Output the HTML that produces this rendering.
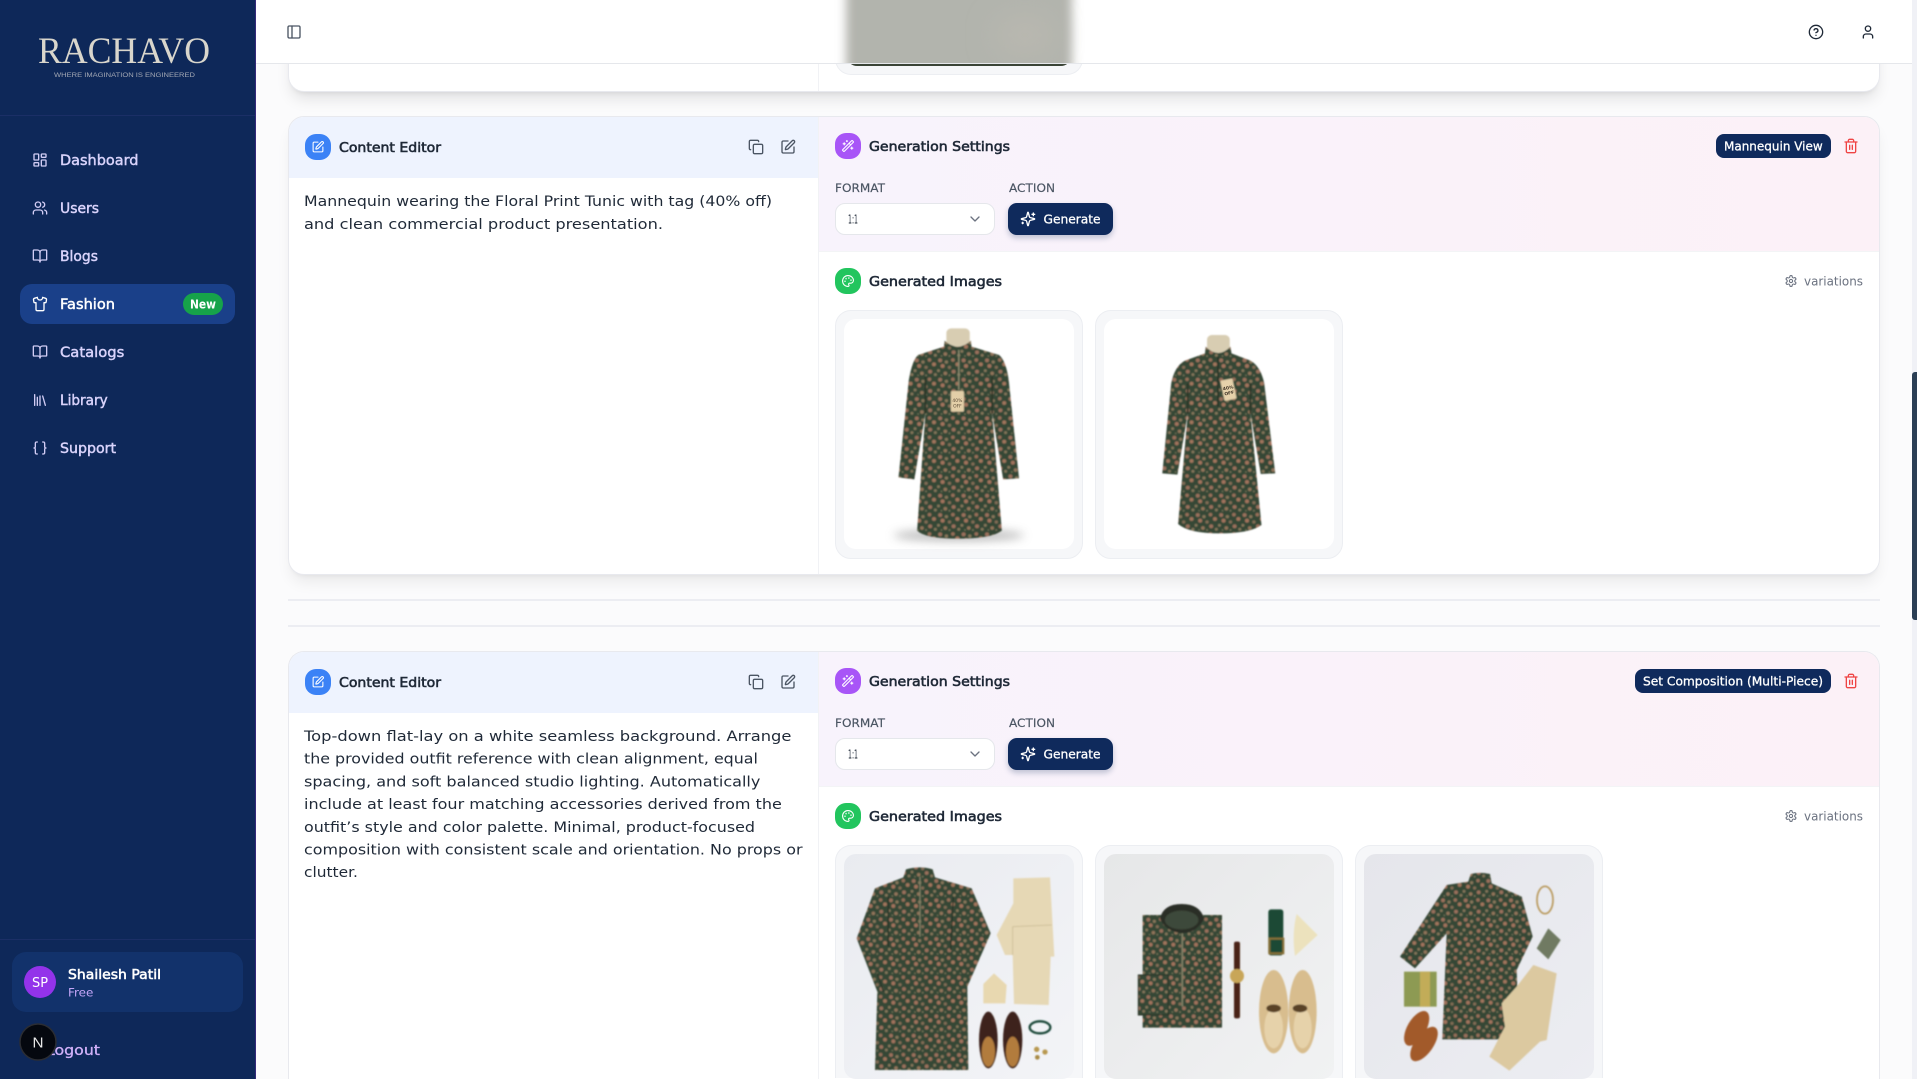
<!DOCTYPE html>
<html lang="en"><head><meta charset="utf-8"><title>Rachavo Fashion</title>
<style>
html,body{margin:0;padding:0;width:1917px;height:1079px;overflow:hidden;background:#fbfbfc;font-family:"DejaVu Sans","Liberation Sans",sans-serif}
#root{position:absolute;left:0;top:0;width:1917px;height:1079px;overflow:hidden;background:#fbfbfc}
.a{position:absolute;box-sizing:border-box}
.card{left:288px;width:1592px;background:#fff;border:1px solid #e8e9ee;border-radius:16px;overflow:hidden;box-shadow:0 10px 15px -3px rgba(0,0,0,.07),0 4px 6px -4px rgba(0,0,0,.07)}
.lh{left:0;top:0;width:529px;height:61px;background:#eef3fe}
.rh{left:530px;top:0;width:1060px;height:135px;background:linear-gradient(90deg,#f8f3fc,#fcf1f7);border-bottom:1px solid #f3f4f6}
.dv{left:529px;top:0;width:1px;height:100%;background:#f1f2f5}
.sel{left:546px;top:86px;width:160px;height:32px;background:#fff;border:1px solid #e5e7eb;border-radius:10px}
.btn{left:719px;top:86px;width:105px;height:32px;background:#0f2a5c;border-radius:9px;box-shadow:0 3px 6px rgba(15,42,92,.25)}
.ic{width:248px;height:249px;background:#f6f7f9;border:1px solid #eceef2;border-radius:16px}
.ic3{height:233px;border-bottom:0;border-radius:16px 16px 0 0}
svg{position:absolute;left:0;top:0}
text{font-family:"DejaVu Sans","Liberation Sans",sans-serif}
.ico{fill:none;stroke-linecap:round;stroke-linejoin:round;stroke-width:2}
.h{font-size:13.5px;fill:#1f2937;stroke:#1f2937;stroke-width:.6}
.n{font-size:14px;fill:#d9d3fb;stroke:#d9d3fb;stroke-width:.45}
.b{font-size:14.2px;fill:#1f2937}
.l{font-size:11.5px;fill:#4b5563;stroke:#4b5563;stroke-width:.15}
.w{font-size:12.5px;fill:#fff;stroke:#fff;stroke-width:.3}
</style></head><body>
<div id="root">

<!-- top card -->
<div class="a" style="left:288px;top:0;width:1592px;height:92px;background:#fff;border:1px solid #e8e9ee;border-top:0;border-radius:0 0 16px 16px;box-shadow:0 10px 15px -3px rgba(0,0,0,.1),0 4px 6px -4px rgba(0,0,0,.1);overflow:hidden">
  <div class="a dv"></div>
  <div class="a" style="left:546px;top:0;width:248px;height:75px;background:#f6f7f9;border:1px solid #eceef2;border-top:0;border-radius:0 0 16px 16px"></div>
  <div class="a" style="left:558px;top:0;width:224px;height:65.7px;background:#3a4436;border-radius:0 0 10px 10px"></div>
</div>

<!-- card 2 -->
<div class="a card" style="top:116px;height:459px">
  <div class="a lh"></div><div class="a rh"></div><div class="a dv"></div>
  <div class="a sel"></div><div class="a btn"></div>
  <div class="a ic" style="left:546px;top:193px"></div>
  <div class="a ic" style="left:806px;top:193px"></div>
</div>
<div class="a" style="left:288px;top:599px;width:1592px;height:2px;background:#ecedf2"></div>
<div class="a" style="left:288px;top:625px;width:1592px;height:2px;background:#ecedf2"></div>

<!-- card 3 -->
<div class="a card" style="top:651px;height:428px;border-bottom:0;border-radius:16px 16px 0 0;box-shadow:none">
  <div class="a lh"></div><div class="a rh"></div><div class="a dv"></div>
  <div class="a sel"></div><div class="a btn"></div>
  <div class="a ic ic3" style="left:546px;top:193px"></div>
  <div class="a ic ic3" style="left:806px;top:193px"></div>
  <div class="a ic ic3" style="left:1066px;top:193px"></div>
</div>

<!-- header -->
<div class="a" style="left:256px;top:0;width:1656px;height:64px;background:#fff;border-bottom:1px solid #e5e7eb"></div>

<!-- scrollbar -->
<div class="a" style="left:1912px;top:0;width:5px;height:1079px;background:#f0f1f6"></div>
<div class="a" style="left:1912px;top:372px;width:5px;height:248px;background:#2b3f55;border-radius:3px 0 0 3px"></div>

<!-- sidebar -->
<div class="a" style="left:0;top:0;width:256px;height:1079px;background:#0e2859;border-right:1px solid #35297a"></div>
<div class="a" style="left:0;top:115px;width:255px;height:1px;background:#1b2f66"></div>
<div class="a" style="left:0;top:939px;width:255px;height:1px;background:#1b2f66"></div>
<div class="a" style="left:20px;top:284px;width:215px;height:40px;background:#1a4089;border-radius:12px"></div>
<div class="a" style="left:183px;top:293px;width:40px;height:22px;background:#16a34a;border-radius:11px"></div>
<div class="a" style="left:12px;top:952px;width:231px;height:60px;background:#12326b;border-radius:14px"></div>
<div class="a" style="left:24px;top:966px;width:32px;height:32px;background:#9333ea;border-radius:50%"></div>

<svg width="1917" height="1079" viewBox="0 0 1917 1079" xmlns="http://www.w3.org/2000/svg">
<defs>
<symbol id="i-dash" viewBox="0 0 24 24"><rect width="7" height="9" x="3" y="3" rx="1"/><rect width="7" height="5" x="14" y="3" rx="1"/><rect width="7" height="9" x="14" y="12" rx="1"/><rect width="7" height="5" x="3" y="16" rx="1"/></symbol>
<symbol id="i-users" viewBox="0 0 24 24"><path d="M16 21v-2a4 4 0 0 0-4-4H6a4 4 0 0 0-4 4v2"/><circle cx="9" cy="7" r="4"/><path d="M22 21v-2a4 4 0 0 0-3-3.87"/><path d="M16 3.13a4 4 0 0 1 0 7.75"/></symbol>
<symbol id="i-book" viewBox="0 0 24 24"><path d="M12 7v14"/><path d="M3 18a1 1 0 0 1-1-1V4a1 1 0 0 1 1-1h5a4 4 0 0 1 4 4 4 4 0 0 1 4-4h5a1 1 0 0 1 1 1v13a1 1 0 0 1-1 1h-6a3 3 0 0 0-3 3 3 3 0 0 0-3-3z"/></symbol>
<symbol id="i-shirt" viewBox="0 0 24 24"><path d="M20.38 3.46 16 2a4 4 0 0 1-8 0L3.62 3.46a2 2 0 0 0-1.34 2.23l.58 3.47a1 1 0 0 0 .99.84H6v10c0 1.1.9 2 2 2h8a2 2 0 0 0 2-2V10h2.15a1 1 0 0 0 .99-.84l.58-3.47a2 2 0 0 0-1.34-2.23z"/></symbol>
<symbol id="i-lib" viewBox="0 0 24 24"><path d="m16 6 4 14"/><path d="M12 6v14"/><path d="M8 8v12"/><path d="M4 4v16"/></symbol>
<symbol id="i-brace" viewBox="0 0 24 24"><path d="M8 3H7a2 2 0 0 0-2 2v5a2 2 0 0 1-2 2 2 2 0 0 1 2 2v5c0 1.1.9 2 2 2h1"/><path d="M16 21h1a2 2 0 0 0 2-2v-5c0-1.1.9-2 2-2a2 2 0 0 1-2-2V5a2 2 0 0 0-2-2h-1"/></symbol>
<symbol id="i-panel" viewBox="0 0 24 24"><rect width="18" height="18" x="3" y="3" rx="2"/><path d="M9 3v18"/></symbol>
<symbol id="i-help" viewBox="0 0 24 24"><circle cx="12" cy="12" r="10"/><path d="M9.09 9a3 3 0 0 1 5.83 1c0 2-3 3-3 3"/><path d="M12 17h.01"/></symbol>
<symbol id="i-user" viewBox="0 0 24 24"><path d="M19 21v-2a4 4 0 0 0-4-4H9a4 4 0 0 0-4 4v2"/><circle cx="12" cy="7" r="4"/></symbol>
<symbol id="i-copy" viewBox="0 0 24 24"><rect width="14" height="14" x="8" y="8" rx="2"/><path d="M4 16c-1.1 0-2-.9-2-2V4c0-1.1.9-2 2-2h10c1.1 0 2 .9 2 2"/></symbol>
<symbol id="i-pen" viewBox="0 0 24 24"><path d="M12 3H5a2 2 0 0 0-2 2v14a2 2 0 0 0 2 2h14a2 2 0 0 0 2-2v-7"/><path d="M18.375 2.625a1 1 0 0 1 3 3l-9.013 9.014a2 2 0 0 1-.853.505l-2.873.84a.5.5 0 0 1-.62-.62l.84-2.873a2 2 0 0 1 .506-.852z"/></symbol>
<symbol id="i-wand" viewBox="0 0 24 24"><path d="m21.64 3.64-1.28-1.28a1.21 1.21 0 0 0-1.72 0L2.36 18.64a1.21 1.21 0 0 0 0 1.72l1.28 1.28a1.2 1.2 0 0 0 1.72 0L21.64 5.36a1.2 1.2 0 0 0 0-1.72"/><path d="m14 7 3 3"/><path d="M5 6v4"/><path d="M19 14v4"/><path d="M10 2v2"/><path d="M7 8H3"/><path d="M21 16h-4"/><path d="M11 3H9"/></symbol>
<symbol id="i-pal" viewBox="0 0 24 24"><path d="M12 22a1 1 0 0 1 0-20 10 9 0 0 1 10 9 5 5 0 0 1-5 5h-2.25a1.75 1.75 0 0 0-1.4 2.8l.3.4a1.75 1.75 0 0 1-1.4 2.8z"/><circle cx="13.5" cy="6.5" r=".5"/><circle cx="17.5" cy="10.5" r=".5"/><circle cx="6.5" cy="12.5" r=".5"/><circle cx="8.5" cy="7.5" r=".5"/></symbol>
<symbol id="i-spark" viewBox="0 0 24 24"><path d="M9.937 15.5A2 2 0 0 0 8.5 14.063l-6.135-1.582a.5.5 0 0 1 0-.962L8.5 9.936A2 2 0 0 0 9.937 8.5l1.582-6.135a.5.5 0 0 1 .963 0L14.063 8.5A2 2 0 0 0 15.5 9.937l6.135 1.581a.5.5 0 0 1 0 .964L15.5 14.063a2 2 0 0 0-1.437 1.437l-1.582 6.135a.5.5 0 0 1-.963 0z"/><path d="M20 3v4"/><path d="M22 5h-4"/><path d="M4 17v2"/><path d="M5 18H3"/></symbol>
<symbol id="i-trash" viewBox="0 0 24 24"><path d="M3 6h18"/><path d="M19 6v14c0 1-1 2-2 2H7c-1 0-2-1-2-2V6"/><path d="M8 6V4c0-1 1-2 2-2h4c1 0 2 1 2 2v2"/><path d="M10 11v6"/><path d="M14 11v6"/></symbol>
<symbol id="i-gear" viewBox="0 0 24 24"><path d="M12.22 2h-.44a2 2 0 0 0-2 2v.18a2 2 0 0 1-1 1.73l-.43.25a2 2 0 0 1-2 0l-.15-.08a2 2 0 0 0-2.73.73l-.22.38a2 2 0 0 0 .73 2.73l.15.1a2 2 0 0 1 1 1.72v.51a2 2 0 0 1-1 1.74l-.15.09a2 2 0 0 0-.73 2.73l.22.38a2 2 0 0 0 2.73.73l.15-.08a2 2 0 0 1 2 0l.43.25a2 2 0 0 1 1 1.73V20a2 2 0 0 0 2 2h.44a2 2 0 0 0 2-2v-.18a2 2 0 0 1 1-1.73l.43-.25a2 2 0 0 1 2 0l.15.08a2 2 0 0 0 2.73-.73l.22-.39a2 2 0 0 0-.73-2.73l-.15-.08a2 2 0 0 1-1-1.74v-.5a2 2 0 0 1 1-1.74l.15-.09a2 2 0 0 0 .73-2.73l-.22-.38a2 2 0 0 0-2.73-.73l-.15.08a2 2 0 0 1-2 0l-.43-.25a2 2 0 0 1-1-1.73V4a2 2 0 0 0-2-2z"/><circle cx="12" cy="12" r="3"/></symbol>
<symbol id="i-chev" viewBox="0 0 24 24"><path d="m6 9 6 6 6-6"/></symbol>

<pattern id="fl" patternUnits="userSpaceOnUse" width="68" height="58">
<rect width="68" height="58" fill="#354636"/>
<circle cx="9" cy="7" r="6" fill="#9a705c"/><circle cx="27" cy="12" r="5" fill="#87765a"/>
<circle cx="16" cy="24" r="6" fill="#a0725c"/><circle cx="36" cy="28" r="5" fill="#826c54"/>
<circle cx="4" cy="38" r="4.500" fill="#85765a"/><circle cx="46" cy="6" r="5.500" fill="#966e58"/>
<circle cx="59" cy="19" r="6" fill="#a0745c"/><circle cx="48" cy="41" r="6" fill="#9a705c"/>
<circle cx="24" cy="46" r="5.500" fill="#92745a"/><circle cx="63" cy="50" r="4.500" fill="#85765a"/>
<circle cx="36" cy="52" r="3" fill="#757055"/><circle cx="13" cy="52" r="2.500" fill="#747355"/>
</pattern>
<filter id="sf" x="-5%" y="-5%" width="110%" height="110%"><feGaussianBlur stdDeviation="2.200"/></filter>
<filter id="sh" x="-30%" y="-200%" width="160%" height="500%"><feGaussianBlur stdDeviation="14"/></filter>
<filter id="bl" x="-10%" y="-50%" width="120%" height="200%"><feGaussianBlur stdDeviation="5"/></filter>
<filter id="bl2" x="-50%" y="-50%" width="200%" height="200%"><feGaussianBlur stdDeviation="14"/></filter>
<clipPath id="hc"><rect x="800" y="0" width="320" height="63"/></clipPath>
<clipPath id="c1"><rect x="844" y="854" width="230" height="225" rx="12"/></clipPath>
<clipPath id="c2"><rect x="1104" y="854" width="230" height="225" rx="12"/></clipPath>
<clipPath id="c3"><rect x="1364" y="854" width="230" height="225" rx="12"/></clipPath>
<linearGradient id="g1" x1="0" y1="0" x2="1" y2="1"><stop offset="0" stop-color="#e9ebf0"/><stop offset="1" stop-color="#f3f4f7"/></linearGradient>
<linearGradient id="g2" x1="0" y1="0" x2="1" y2="1"><stop offset="0" stop-color="#e6e7e8"/><stop offset="1" stop-color="#f1f2f3"/></linearGradient>
<linearGradient id="g3" x1="0" y1="0" x2="1" y2="1"><stop offset="0" stop-color="#e5e6eb"/><stop offset="1" stop-color="#ecedf2"/></linearGradient>
</defs>

<!-- header blur -->
<g clip-path="url(#hc)"><rect x="846" y="-30" width="226" height="110" fill="#b2b4ad" filter="url(#bl)"/>
<ellipse cx="1025" cy="35" rx="30" ry="20" fill="#b9b8b0" filter="url(#bl2)"/></g>

<!-- logo -->
<text x="38" y="63" font-size="37.500" textLength="172" lengthAdjust="spacingAndGlyphs" style="font-family:'Liberation Serif',serif" fill="#d9d6cc">RACHAVO</text>
<text x="54" y="77" font-size="6.800" textLength="141" lengthAdjust="spacingAndGlyphs" style="font-family:'Liberation Sans',sans-serif" fill="#a3a8b4">WHERE IMAGINATION IS ENGINEERED</text>

<!-- nav -->
<g class="ico" stroke="#d2cdf5" stroke-width="2">
<use href="#i-dash" x="32" y="152" width="16" height="16"/>
<use href="#i-users" x="32" y="200" width="16" height="16"/>
<use href="#i-book" x="32" y="248" width="16" height="16"/>
<use href="#i-shirt" x="32" y="296" width="16" height="16" stroke="#fff"/>
<use href="#i-book" x="32" y="344" width="16" height="16"/>
<use href="#i-lib" x="32" y="392" width="16" height="16"/>
<use href="#i-brace" x="32" y="440" width="16" height="16"/>
</g>
<text class="n" x="60" y="165" textLength="78.500" lengthAdjust="spacingAndGlyphs">Dashboard</text>
<text class="n" x="60" y="213" textLength="39" lengthAdjust="spacingAndGlyphs">Users</text>
<text class="n" x="60" y="261" textLength="38" lengthAdjust="spacingAndGlyphs">Blogs</text>
<text class="n" x="60" y="309" textLength="55" lengthAdjust="spacingAndGlyphs" style="fill:#fff;stroke:#fff">Fashion</text>
<text class="n" x="60" y="357" textLength="64.300" lengthAdjust="spacingAndGlyphs">Catalogs</text>
<text class="n" x="60" y="405" textLength="47.700" lengthAdjust="spacingAndGlyphs">Library</text>
<text class="n" x="60" y="453" textLength="56" lengthAdjust="spacingAndGlyphs">Support</text>
<text x="190" y="308.500" font-size="12" font-weight="700" fill="#fff" textLength="26" lengthAdjust="spacingAndGlyphs">New</text>

<!-- user -->
<text x="32" y="987" font-size="13.500" fill="#fff" textLength="16" lengthAdjust="spacingAndGlyphs">SP</text>
<text x="68" y="979" font-size="13.500" fill="#fff" stroke="#fff" stroke-width=".55" textLength="93" lengthAdjust="spacingAndGlyphs">Shailesh Patil</text>
<text x="68" y="996.500" font-size="11.500" fill="#c4a6f8" textLength="25.300" lengthAdjust="spacingAndGlyphs">Free</text>
<text x="46" y="1055" font-size="14" fill="#d0b0f8" stroke="#d0b0f8" stroke-width=".3" textLength="54" lengthAdjust="spacingAndGlyphs">Logout</text>
<circle cx="38" cy="1042" r="18" fill="#05080f" stroke="#2b2d33" stroke-width="1.500"/>
<text x="32.500" y="1047.500" font-size="15" fill="#e8e8e8" style="font-family:'Liberation Sans',sans-serif" textLength="11" lengthAdjust="spacingAndGlyphs">N</text>

<!-- header icons -->
<g class="ico" stroke="#4b5563">
<use href="#i-panel" x="286" y="24" width="16" height="16"/>
</g>
<g class="ico" stroke="#1f2937">
<use href="#i-help" x="1808" y="24" width="16" height="16"/>
<use href="#i-user" x="1860" y="24" width="16" height="16"/>
</g>

<!-- repeated content: card 2 -->
<g id="c2g">
<rect x="305" y="134" width="26" height="26" rx="11" fill="#3b82f6"/>
<use href="#i-pen" x="311.500" y="140.500" width="13" height="13" class="ico" stroke="#fff"/>
<text class="h" x="339" y="152" textLength="102" lengthAdjust="spacingAndGlyphs">Content Editor</text>
<g class="ico" stroke="#4b5563"><use href="#i-copy" x="748" y="139" width="16" height="16"/><use href="#i-pen" x="780" y="139" width="16" height="16"/></g>
<rect x="835" y="133" width="26" height="26" rx="11" fill="#a855f7"/>
<use href="#i-wand" x="841.500" y="139.500" width="13" height="13" class="ico" stroke="#fff"/>
<text class="h" x="869" y="151" textLength="141" lengthAdjust="spacingAndGlyphs">Generation Settings</text>
<text class="l" x="835" y="192" textLength="50" lengthAdjust="spacingAndGlyphs">FORMAT</text>
<text class="l" x="1009" y="192" textLength="46" lengthAdjust="spacingAndGlyphs">ACTION</text>
<text x="848" y="223.500" font-size="12" fill="#1f2937" textLength="10" lengthAdjust="spacingAndGlyphs">1:1</text>
<use href="#i-chev" x="967" y="211" width="16" height="16" class="ico" stroke="#6b7280"/>
<use href="#i-spark" x="1020" y="211" width="16" height="16" class="ico" stroke="#fff"/>
<text class="w" x="1043.500" y="223.500" textLength="57" lengthAdjust="spacingAndGlyphs">Generate</text>
<rect x="835" y="268" width="26" height="26" rx="11" fill="#22c55e"/>
<use href="#i-pal" x="841.500" y="274.500" width="13" height="13" class="ico" stroke="#fff"/>
<text class="h" x="869" y="286" textLength="133" lengthAdjust="spacingAndGlyphs">Generated Images</text>
<use href="#i-gear" x="1784.500" y="274.500" width="13" height="13" class="ico" stroke="#6b7280"/>
<text x="1804" y="285.500" font-size="12.500" fill="#6b7280" textLength="59" lengthAdjust="spacingAndGlyphs">variations</text>
<use href="#i-trash" x="1843" y="138" width="16" height="16" class="ico" stroke="#ef4444"/>
</g>

<!-- card 2 specifics -->
<rect x="1716" y="134" width="115" height="24" rx="8" fill="#0f2a5c"/>
<text class="w" x="1724" y="150.500" textLength="98.700" lengthAdjust="spacingAndGlyphs">Mannequin View</text>
<text class="b" x="304" y="206" textLength="468" lengthAdjust="spacingAndGlyphs">Mannequin wearing the Floral Print Tunic with tag (40% off)</text>
<text class="b" x="304" y="229" textLength="359" lengthAdjust="spacingAndGlyphs">and clean commercial product presentation.</text>

<!-- card 2 images -->
<rect x="844" y="319" width="230" height="230" rx="12" fill="#fff"/>
<rect x="1104" y="319" width="230" height="230" rx="12" fill="#fff"/>

<g transform="translate(820,300) scale(.34435,.33333)">
<ellipse cx="403" cy="706" rx="190" ry="17" fill="#777" opacity=".5" filter="url(#sh)"/>
<g filter="url(#sf)">
<rect x="367" y="85" width="68" height="55" rx="14" fill="#d8cdb2"/>
<path d="M362,122 Q400,158 438,122 L440,140 L520,165 Q540,182 548,240 L578,535 L532,538 L500,340 L528,692 Q500,716 400,716 Q305,716 282,692 L306,340 L274,538 L228,532 L258,240 Q268,180 285,165 L360,140 Z" fill="url(#fl)"/>
<path d="M306,230 L306,340 M500,230 L500,340" stroke="#2a3528" stroke-width="5" fill="none"/>
<path d="M403,150 L403,270" stroke="#8a8a70" stroke-width="4" fill="none"/>
<rect x="380" y="273" width="38" height="62" rx="4" fill="#e3cfa8"/>
</g>
<text x="399" y="306" font-size="13" text-anchor="middle" fill="#5a4a35">40%</text>
<text x="399" y="322" font-size="13" text-anchor="middle" fill="#5a4a35">OFF</text>
</g>

<g transform="translate(820,300) scale(.34435,.33333)">
<g filter="url(#sf)">
<rect x="1124" y="105" width="66" height="60" rx="14" fill="#d8cdb2"/>
<path d="M1120,140 Q1157,178 1192,140 L1195,160 L1250,182 Q1280,200 1290,250 L1322,520 L1280,522 L1250,340 L1282,675 Q1250,700 1160,700 Q1070,700 1040,672 L1068,340 L1038,524 L994,520 L1020,250 Q1030,198 1060,182 L1118,160 Z" fill="url(#fl)"/>
<path d="M1068,250 L1068,340 M1250,250 L1250,340" stroke="#2a3528" stroke-width="5" fill="none"/>
<path d="M1156,170 L1156,320" stroke="#2a3528" stroke-width="5" fill="none"/>
<g transform="rotate(-12 1186 268)"><rect x="1168" y="238" width="36" height="62" rx="4" fill="#e6d2ab"/></g>
</g>
<g transform="rotate(-12 1186 268)"><text x="1186" y="268" font-size="13" font-weight="700" text-anchor="middle" fill="#3d3225">40%</text><text x="1186" y="284" font-size="13" font-weight="700" text-anchor="middle" fill="#3d3225">OFF</text></g>
</g>

<!-- card 3 -->
<use href="#c2g" y="535"/>
<rect x="1635" y="669" width="196" height="24" rx="8" fill="#0f2a5c"/>
<text class="w" x="1643" y="685.500" textLength="180" lengthAdjust="spacingAndGlyphs">Set Composition (Multi-Piece)</text>
<g class="b">
<text x="304" y="741" textLength="487.400" lengthAdjust="spacingAndGlyphs">Top-down flat-lay on a white seamless background. Arrange</text>
<text x="304" y="763.700" textLength="453.900" lengthAdjust="spacingAndGlyphs">the provided outfit reference with clean alignment, equal</text>
<text x="304" y="786.400" textLength="456.400" lengthAdjust="spacingAndGlyphs">spacing, and soft balanced studio lighting. Automatically</text>
<text x="304" y="809.100" textLength="477.800" lengthAdjust="spacingAndGlyphs">include at least four matching accessories derived from the</text>
<text x="304" y="831.800" textLength="451" lengthAdjust="spacingAndGlyphs">outfit’s style and color palette. Minimal, product-focused</text>
<text x="304" y="854.500" textLength="498.500" lengthAdjust="spacingAndGlyphs">composition with consistent scale and orientation. No props or</text>
<text x="304" y="877.200" textLength="53.900" lengthAdjust="spacingAndGlyphs">clutter.</text>
</g>

<!-- flatlay 1 -->
<g clip-path="url(#c1)"><rect x="844" y="854" width="230" height="225" fill="url(#g1)"/>
<g transform="translate(820,840) scale(.33333)" filter="url(#sf)">
<path d="M258,88 Q300,76 338,88 L345,112 L455,145 L512,280 L442,440 L445,690 L165,690 L172,455 L110,295 L165,145 L250,112 Z" fill="url(#fl)"/>
<path d="M205,170 L205,320 M400,170 L392,330 M190,455 L172,400" stroke="#2a3528" stroke-width="4" fill="none"/>
<path d="M300,110 L300,290" stroke="#7f7f65" stroke-width="4" fill="none"/>
<path d="M580,115 L690,112 L703,350 L692,350 L686,495 L582,492 L578,345 L555,345 L530,285 L580,190 Z" fill="#e6d8b5"/>
<path d="M578,260 L695,255 M578,260 L578,345" stroke="#cfc09a" stroke-width="3" fill="none"/>
<path d="M490,432 L522,400 L560,435 L556,490 L490,490 Z" fill="#e8d8b0"/>
<ellipse cx="505" cy="600" rx="28" ry="85" fill="#3d241d"/><ellipse cx="578" cy="600" rx="29" ry="85" fill="#3d241d"/>
<ellipse cx="505" cy="635" rx="20" ry="45" fill="#b27c3c"/><ellipse cx="578" cy="635" rx="20" ry="45" fill="#b27c3c"/>
<ellipse cx="660" cy="562" rx="31" ry="18" fill="none" stroke="#1d4a3a" stroke-width="7"/>
<circle cx="650" cy="628" r="8" fill="#b8984f"/><circle cx="675" cy="636" r="8" fill="#b8984f"/><circle cx="652" cy="652" r="7" fill="#a88a45"/>
</g></g>

<!-- flatlay 2 -->
<g clip-path="url(#c2)"><rect x="1104" y="854" width="230" height="225" fill="url(#g2)"/>
<g transform="translate(1100,840) scale(.33333)" filter="url(#sf)">
<rect x="128" y="225" width="238" height="338" fill="url(#fl)"/>
<rect x="115" y="405" width="90" height="120" fill="url(#fl)"/>
<path d="M115,405 L205,405 L205,525 L115,525 Z" fill="none" stroke="#2a3528" stroke-width="3"/>
<path d="M180,235 Q190,192 245,192 Q300,192 312,235 Q295,275 250,280 Q195,275 180,235 Z" fill="#2a2f26"/>
<ellipse cx="245" cy="240" rx="50" ry="28" fill="#3d4a3a"/>
<path d="M247,280 L247,500" stroke="#7f7f65" stroke-width="5" fill="none"/>
<rect x="402" y="305" width="18" height="230" rx="6" fill="#4a2418"/>
<circle cx="411" cy="408" r="21" fill="#c8a658"/>
<rect x="505" y="208" width="45" height="138" rx="8" fill="#1d4a34"/>
<rect x="508" y="296" width="42" height="44" fill="none" stroke="#8a7238" stroke-width="6"/>
<path d="M590,222 L653,285 L585,348 Q575,280 590,222 Z" fill="#ece2bd"/>
<ellipse cx="521" cy="515" rx="44" ry="125" fill="#d8bd8e"/><ellipse cx="608" cy="515" rx="42" ry="125" fill="#d8bd8e"/>
<ellipse cx="521" cy="565" rx="28" ry="60" fill="#e6d2aa"/><ellipse cx="608" cy="565" rx="27" ry="60" fill="#e6d2aa"/>
<ellipse cx="521" cy="505" rx="22" ry="12" fill="#5a4328"/><ellipse cx="600" cy="505" rx="22" ry="12" fill="#5a4328"/>
</g></g>

<!-- flatlay 3 -->
<g clip-path="url(#c3)"><rect x="1364" y="854" width="230" height="225" fill="url(#g3)"/>
<g transform="translate(1100,840) scale(.33333)" filter="url(#sf)">
<path d="M1112,102 Q1140,95 1170,102 L1175,130 L1265,170 L1298,290 L1250,390 L1255,530 L1200,598 L1027,598 L1040,280 L945,385 L900,350 L1040,135 L1105,125 Z" fill="url(#fl)"/>
<ellipse cx="1335" cy="180" rx="24" ry="41" fill="none" stroke="#b8985a" stroke-width="5"/>
<path d="M1345,265 L1382,300 L1345,358 L1310,325 Z" fill="#6f7a62"/>
<path d="M1300,375 L1370,400 L1340,600 L1320,605 L1228,692 L1168,650 L1215,560 L1205,490 L1250,440 Z" fill="#dcc9a0"/>
<rect x="912" y="395" width="98" height="105" fill="#8d9a52"/><rect x="960" y="395" width="30" height="105" fill="#c2ac58"/>
<ellipse cx="950" cy="565" rx="28" ry="58" transform="rotate(30 950 565)" fill="#a25a2a"/>
<ellipse cx="972" cy="612" rx="28" ry="60" transform="rotate(35 972 612)" fill="#a25a2a"/>
</g></g>
</svg>
</div>
</body></html>
